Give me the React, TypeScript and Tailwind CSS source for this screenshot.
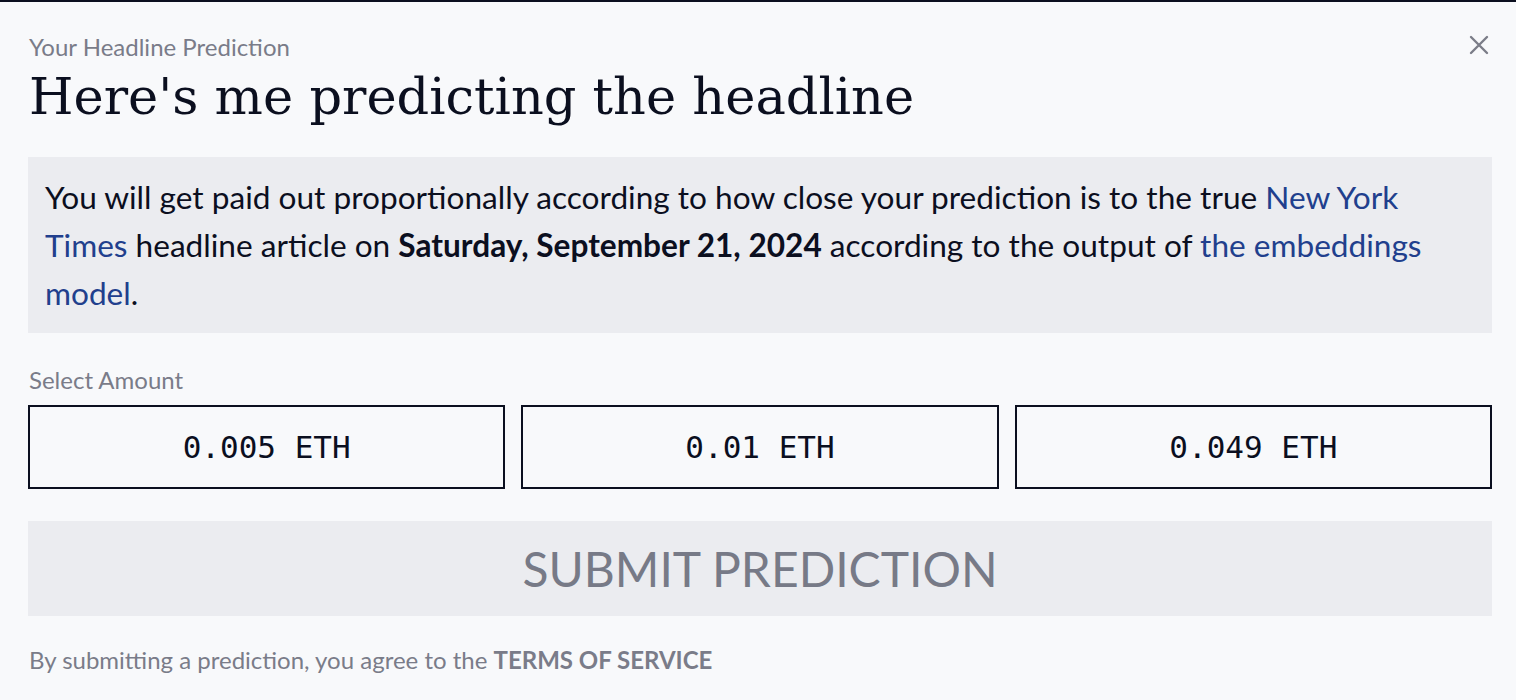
import React from "react";

export default function App() {
  const sans = { fontFamily: "Lato, 'Noto Sans', sans-serif" };
  return (
    <div className="min-h-[700px] w-full bg-[#f8f9fb] border-t-2 border-[#0b0f1f] pl-[28px] pr-[24px] pt-[31px] text-[#0b0f1f]" style={sans}>
      <div className="flex items-start justify-between">
        <div className="flex flex-col">
          <div className="text-[24px] leading-[28px] text-[#7a7c89] pl-[1px]">Your Headline Prediction</div>
          <h1 className="mt-[4px] text-[51px] leading-[64px] text-[#0b0f1f] pl-[1px]" style={{ fontFamily: "'DejaVu Serif', 'Liberation Serif', serif" }}>
            Here's me predicting the headline
          </h1>
        </div>
        <button className="mt-[1px] mr-[2px] p-0 text-[#7b7d88]" aria-label="Close">
          <svg width="22" height="22" viewBox="0 0 22 22" fill="none" stroke="currentColor" strokeWidth="2.4" strokeLinecap="round">
            <path d="M3 3 L19 19 M19 3 L3 19" />
          </svg>
        </button>
      </div>

      <div className="mt-[28px] bg-[#ebecf0] px-[17px] py-[16px] text-[31.6px] leading-[48px] text-[#0b0f1f] whitespace-nowrap">
        You will get paid out proportionally according to how close your prediction is to the true{" "}
        <a className="text-[#213f8d]">New York</a>
        <br />
        <a className="text-[#213f8d]">Times</a> headline article on <span className="font-bold">Saturday, September 21, 2024</span> according to the output of{" "}
        <a className="text-[#213f8d]">the embeddings</a>
        <br />
        <a className="text-[#213f8d]">model</a>.
      </div>

      <div className="mt-[33px] text-[24px] leading-[28px] text-[#7a7c89] pl-[1px]">Select Amount</div>
      <div className="mt-[11px] grid grid-cols-3 gap-[16px]">
        {["0.005 ETH", "0.01 ETH", "0.049 ETH"].map((v) => (
          <button
            key={v}
            className="h-[84px] border-2 border-[#0b0f1f] bg-[#f8f9fb] text-[31px] text-[#0b0f1f]"
            style={{ fontFamily: "'DejaVu Sans Mono', 'Liberation Mono', monospace" }}
          >
            {v}
          </button>
        ))}
      </div>

      <button className="mt-[32px] h-[95px] w-full bg-[#ebecf0] text-[48px] text-[#777a87]">
        SUBMIT PREDICTION
      </button>

      <div className="mt-[30px] text-[24px] leading-[28px] text-[#7a7c89] pl-[1px]">
        By submitting a prediction, you agree to the <span className="font-bold">TERMS OF SERVICE</span>
      </div>
    </div>
  );
}
